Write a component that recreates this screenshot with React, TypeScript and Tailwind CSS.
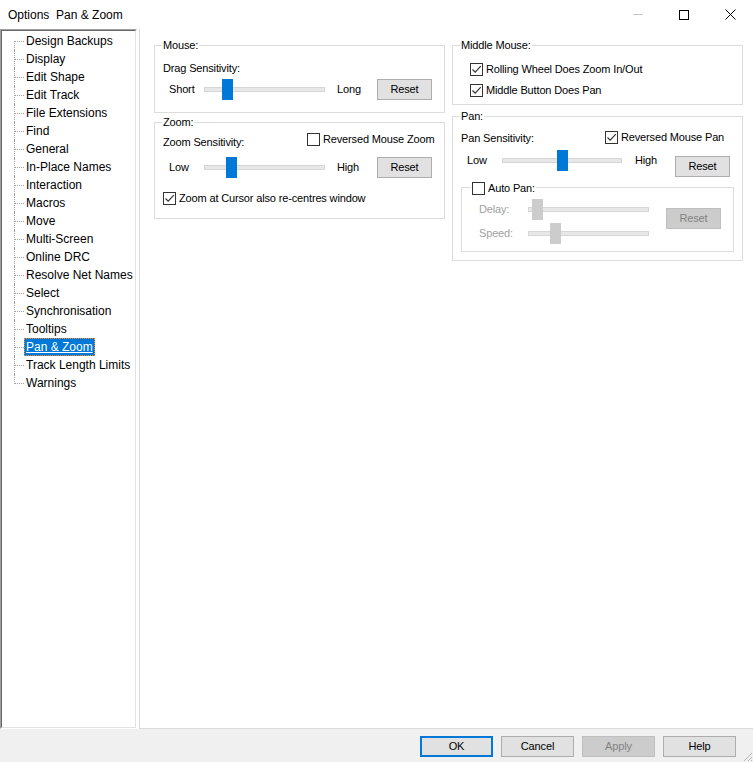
import type { ReactNode } from "react";

const treeItems = [
  "Design Backups",
  "Display",
  "Edit Shape",
  "Edit Track",
  "File Extensions",
  "Find",
  "General",
  "In-Place Names",
  "Interaction",
  "Macros",
  "Move",
  "Multi-Screen",
  "Online DRC",
  "Resolve Net Names",
  "Select",
  "Synchronisation",
  "Tooltips",
  "Pan & Zoom",
  "Track Length Limits",
  "Warnings",
];

function Tick() {
  return (
    <svg width="11" height="11" viewBox="0 0 11 11">
      <path d="M1.5 5.5 L4.2 8.2 L9.8 2.2" stroke="#333333" strokeWidth="1.2" fill="none" />
    </svg>
  );
}

function Check({ checked, label }: { checked?: boolean; label: string }) {
  return (
    <label className="flex h-[17px] items-center gap-[3px] whitespace-nowrap bg-white">
      <span className="flex h-[13px] w-[13px] items-center justify-center border border-[#333333] bg-white">
        {checked ? <Tick /> : null}
      </span>
      <span>{label}</span>
    </label>
  );
}

function Slider({ className, pos, disabled }: { className: string; pos: number; disabled?: boolean }) {
  return (
    <div className={`relative flex h-[21px] shrink-0 items-center ${className}`}>
      <div className="h-[5px] w-full border border-[#d6d6d6] bg-[#e7e7e7]" />
      <div
        className={`absolute top-0 h-[21px] w-[11px] ${disabled ? "bg-[#cccccc]" : "bg-[#0078d7]"}`}
        style={{ left: pos }}
      />
    </div>
  );
}

function ResetButton({ disabled, className = "" }: { disabled?: boolean; className?: string }) {
  return (
    <button
      type="button"
      className={`h-[21px] w-[55px] shrink-0 border ${
        disabled ? "border-[#bfbfbf] bg-[#cccccc] text-[#838383]" : "border-[#adadad] bg-[#e1e1e1] text-black"
      } ${className}`}
    >
      Reset
    </button>
  );
}

function Group({ title, className, children }: { title: ReactNode; className: string; children: ReactNode }) {
  return (
    <div className={`relative border border-[#dcdcdc] ${className}`}>
      <div className="absolute -top-[8px] left-[7px] bg-white px-[1px] leading-[15px]">{title}</div>
      {children}
    </div>
  );
}

function Tree() {
  return (
    <div className="h-full w-[137px] shrink-0 border border-t-[#a0a0a0] border-l-[#a0a0a0] border-r-white border-b-white">
      <div className="h-full border border-t-[#696969] border-l-[#696969] border-r-[#e3e3e3] border-b-[#e3e3e3] bg-white pt-[1px] text-[12px] tracking-normal">
        {treeItems.map((item, i) => (
          <div key={item} className="relative flex h-[18px] items-center pl-[22px]">
            <span
              className={`absolute left-[12px] w-0 border-l border-dotted border-[#a0a0a0] ${
                i === 0 ? "top-[9px] bottom-0" : i === treeItems.length - 1 ? "top-0 h-[10px]" : "top-0 bottom-0"
              }`}
            />
            <span className="absolute left-[13px] top-[9px] w-[9px] border-t border-dotted border-[#a0a0a0]" />
            {item === "Pan & Zoom" ? (
              <span className="border border-dotted border-[#ff8728] bg-[#0078d7] px-[1px] leading-[16px] text-white underline">
                {item}
              </span>
            ) : (
              <span className="border border-transparent px-[1px] leading-[16px]">{item}</span>
            )}
          </div>
        ))}
      </div>
    </div>
  );
}

export default function App() {
  return (
    <div className="flex h-[762px] w-[753px] flex-col overflow-hidden bg-white text-[11px] tracking-[-0.15px] text-black [font-family:'Liberation_Sans',Arial,sans-serif]">
      {/* title bar */}
      <div className="flex h-[29px] shrink-0 items-center tracking-normal">
        <div className="flex-1 whitespace-pre pl-[8px] text-[12px]">Options  Pan &amp; Zoom</div>
        <div className="flex h-[29px] w-[46px] items-center justify-center">
          <span className="h-px w-[10px] bg-[#c8c8c8]" />
        </div>
        <div className="flex h-[29px] w-[46px] items-center justify-center">
          <span className="h-[10px] w-[10px] border border-black" />
        </div>
        <div className="flex h-[29px] w-[46px] items-center justify-center">
          <svg width="11" height="11" viewBox="0 0 11 11">
            <path d="M0.5 0.5 L10.5 10.5 M10.5 0.5 L0.5 10.5" stroke="#000" strokeWidth="1" />
          </svg>
        </div>
      </div>

      {/* body */}
      <div className="flex h-[700px] shrink-0">
        <Tree />
        <div className="w-[2px] shrink-0" />
        <div className="flex flex-1 gap-[7px] border-b border-l border-[#dadada] pl-[14px] pt-[16px]">
          {/* left column */}
          <div className="flex w-[291px] flex-col">
            <Group title="Mouse:" className="h-[68px]">
              <div className="pl-[8px] pt-[14px]">
                <div className="leading-[16px]">Drag Sensitivity:</div>
                <div className="ml-[6px] mt-[3px] flex h-[21px] items-center">
                  <span className="w-[35px] shrink-0">Short</span>
                  <Slider className="w-[121px]" pos={18} />
                  <span className="ml-[12px] w-[40px] shrink-0">Long</span>
                  <ResetButton />
                </div>
              </div>
            </Group>
            <Group title="Zoom:" className="mt-[9px] h-[97px]">
              <div className="pl-[8px] pt-[8px]">
                <div className="flex items-start">
                  <span className="w-[144px] shrink-0 pt-[3px] leading-[16px]">Zoom Sensitivity:</span>
                  <Check label="Reversed Mouse Zoom" />
                </div>
                <div className="ml-[6px] mt-[7px] flex h-[21px] items-center">
                  <span className="w-[35px] shrink-0">Low</span>
                  <Slider className="w-[121px]" pos={22} />
                  <span className="ml-[12px] w-[40px] shrink-0">High</span>
                  <ResetButton />
                </div>
                <div className="mt-[12px]">
                  <Check checked label="Zoom at Cursor also re-centres window" />
                </div>
              </div>
            </Group>
          </div>

          {/* right column */}
          <div className="flex w-[291px] flex-col">
            <Group title="Middle Mouse:" className="h-[60px]">
              <div className="pl-[17px] pt-[15px]">
                <Check checked label="Rolling Wheel Does Zoom In/Out" />
                <div className="mt-[4px]">
                  <Check checked label="Middle Button Does Pan" />
                </div>
              </div>
            </Group>
            <Group title="Pan:" className="mt-[11px] h-[145px]">
              <div className="pl-[8px] pt-[12px]">
                <div className="flex items-center">
                  <span className="w-[144px] shrink-0 leading-[16px]">Pan Sensitivity:</span>
                  <Check checked label="Reversed Mouse Pan" />
                </div>
                <div className="ml-[6px] mt-[4px] flex items-start">
                  <span className="w-[35px] shrink-0 leading-[21px]">Low</span>
                  <Slider className="w-[120px]" pos={55} />
                  <span className="ml-[13px] w-[40px] shrink-0 leading-[21px]">High</span>
                  <ResetButton className="mt-[6px]" />
                </div>
                <div className="relative mt-[10px] h-[65px] w-[273px] border border-[#dcdcdc]">
                  <div className="absolute -top-[8px] left-[9px] bg-white px-[1px]">
                    <Check label="Auto Pan:" />
                  </div>
                  <div className="flex pl-[17px] pt-[11px]">
                    <div className="flex flex-col gap-[3px]">
                      <div className="flex h-[21px] items-center">
                        <span className="w-[49px] shrink-0 text-[#a0a0a0]">Delay:</span>
                        <Slider className="w-[121px]" pos={4} disabled />
                      </div>
                      <div className="flex h-[21px] items-center">
                        <span className="w-[49px] shrink-0 text-[#a0a0a0]">Speed:</span>
                        <Slider className="w-[121px]" pos={22} disabled />
                      </div>
                    </div>
                    <ResetButton disabled className="ml-[17px] mt-[9px]" />
                  </div>
                </div>
              </div>
            </Group>
          </div>
        </div>
      </div>

      {/* bottom bar */}
      <div className="relative flex flex-1 justify-end gap-[8px] bg-[#f0f0f0] pr-[17px] pt-[7px]">
        <button type="button" className="h-[21px] w-[73px] border-2 border-[#0078d7] bg-[#e1e1e1]">
          OK
        </button>
        <button type="button" className="h-[21px] w-[73px] border border-[#adadad] bg-[#e1e1e1]">
          Cancel
        </button>
        <button type="button" className="h-[21px] w-[73px] border border-[#bfbfbf] bg-[#cccccc] text-[#838383]">
          Apply
        </button>
        <button type="button" className="h-[21px] w-[73px] border border-[#adadad] bg-[#e1e1e1]">
          Help
        </button>
        <svg className="absolute bottom-0 right-0" width="12" height="12" viewBox="0 0 12 12">
          <path d="M11 3 L3 11 M11 7 L7 11 M11 10 L10 11" stroke="#b8b8b8" strokeWidth="1" />
        </svg>
      </div>
    </div>
  );
}
